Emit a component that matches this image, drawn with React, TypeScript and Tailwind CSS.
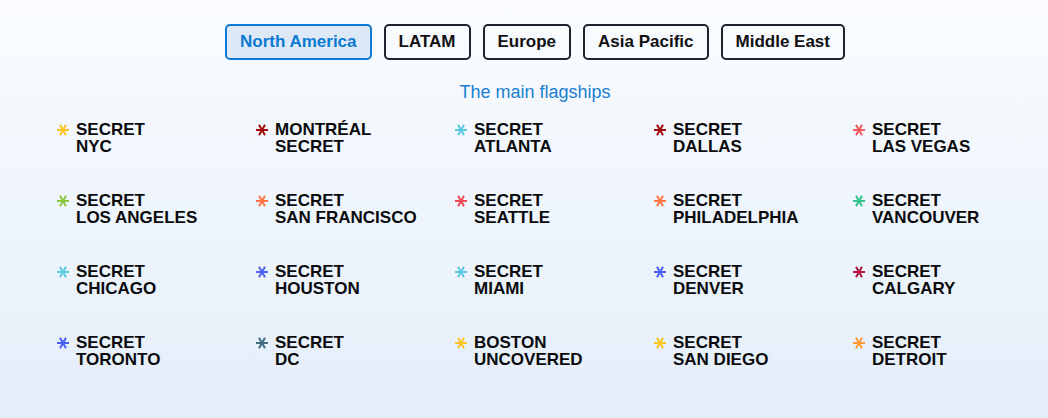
import React from "react";

type Item = { top: string; bottom: string; color: string };

const items: Item[] = [
  { top: "SECRET", bottom: "NYC", color: "#ffc425" },
  { top: "MONTRÉAL", bottom: "SECRET", color: "#a30d10" },
  { top: "SECRET", bottom: "ATLANTA", color: "#5ccbe2" },
  { top: "SECRET", bottom: "DALLAS", color: "#a30d10" },
  { top: "SECRET", bottom: "LAS VEGAS", color: "#f4595c" },
  { top: "SECRET", bottom: "LOS ANGELES", color: "#8dc641" },
  { top: "SECRET", bottom: "SAN FRANCISCO", color: "#ff7545" },
  { top: "SECRET", bottom: "SEATTLE", color: "#f24a55" },
  { top: "SECRET", bottom: "PHILADELPHIA", color: "#ff7545" },
  { top: "SECRET", bottom: "VANCOUVER", color: "#33c48e" },
  { top: "SECRET", bottom: "CHICAGO", color: "#5ccbe2" },
  { top: "SECRET", bottom: "HOUSTON", color: "#4b62f2" },
  { top: "SECRET", bottom: "MIAMI", color: "#5ccbe2" },
  { top: "SECRET", bottom: "DENVER", color: "#4b62f2" },
  { top: "SECRET", bottom: "CALGARY", color: "#b3173f" },
  { top: "SECRET", bottom: "TORONTO", color: "#4b5ff5" },
  { top: "SECRET", bottom: "DC", color: "#3e6c80" },
  { top: "BOSTON", bottom: "UNCOVERED", color: "#ffc425" },
  { top: "SECRET", bottom: "SAN DIEGO", color: "#ffc425" },
  { top: "SECRET", bottom: "DETROIT", color: "#ff9a3a" },
];

const tabs = ["North America", "LATAM", "Europe", "Asia Pacific", "Middle East"];

function Star({ color }: { color: string }) {
  return (
    <svg width="12" height="12" viewBox="0 0 12 12" className="shrink-0 mt-[3px]">
      <g stroke={color} strokeWidth="2" strokeLinecap="butt">
        <line x1="0" y1="6" x2="12" y2="6" />
        <line x1="3" y1="0.8" x2="9" y2="11.2" />
        <line x1="9" y1="0.8" x2="3" y2="11.2" />
      </g>
    </svg>
  );
}

export default function App() {
  return (
    <div
      className="w-full h-[418px] overflow-hidden bg-gradient-to-b from-[#fafcff] to-[#e4eef9]"
      style={{ fontFamily: '"Liberation Sans", Arial, sans-serif' }}
    >
      <div className="pl-[22px] pt-[24px] flex flex-col items-center">
        <div className="flex gap-[12px]">
          {tabs.map((t, i) => (
            <div
              key={t}
              className={
                i === 0
                  ? "h-[36px] px-[13px] flex items-center border-2 border-[#0a7ad3] bg-[#dde9f6] text-[#0a7ad3] rounded-[5px] font-bold text-[17px] leading-[20px]"
                  : "h-[36px] px-[13px] flex items-center border-2 border-[#1c2430] text-[#111] rounded-[5px] font-bold text-[17px] leading-[20px]"
              }
            >
              {t}
            </div>
          ))}
        </div>
        <div className="mt-[22px] text-[18px] leading-[20px] text-[#1b80d1]">The main flagships</div>
      </div>
      <div className="mt-[19px] pl-[57px] grid grid-cols-[repeat(4,199px)_1fr] gap-y-[37px]">
        {items.map((it, i) => (
          <div key={i} className="flex gap-[7px] h-[34px]">
            <Star color={it.color} />
            <div className="font-bold text-[17px] leading-[17px] text-[#0b0b0d]">
              <div>{it.top}</div>
              <div>{it.bottom}</div>
            </div>
          </div>
        ))}
      </div>
    </div>
  );
}
